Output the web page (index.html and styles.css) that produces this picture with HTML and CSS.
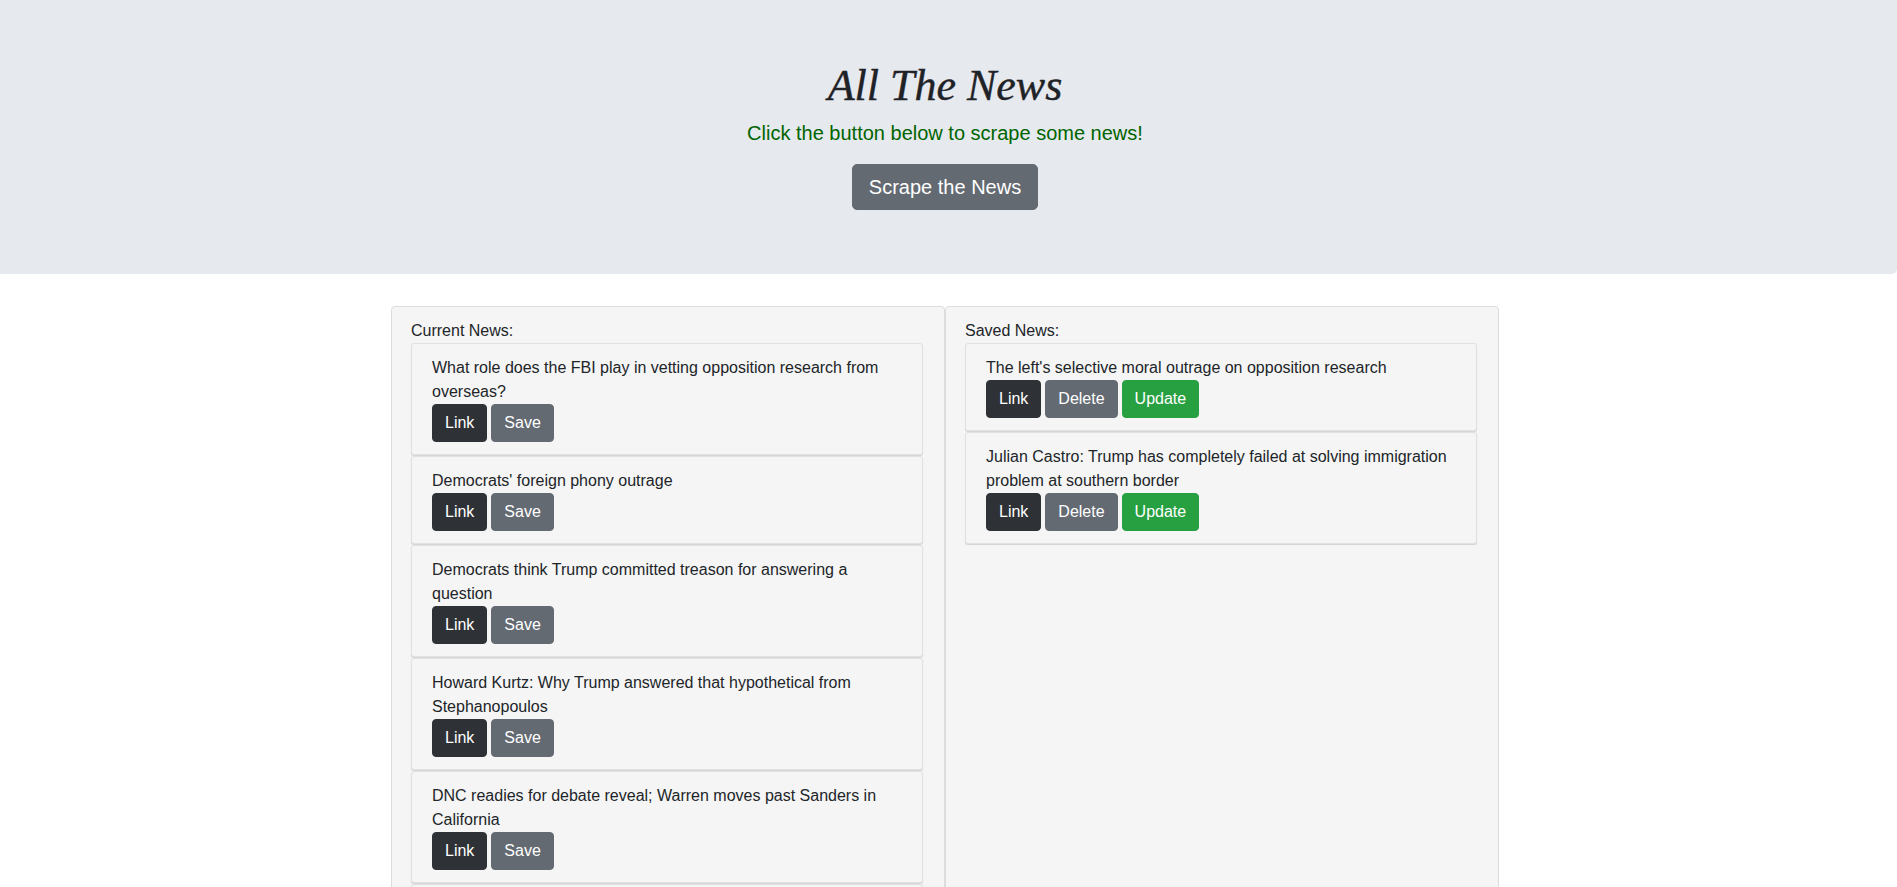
FILE: index.html
```html
<!DOCTYPE html>
<html lang="en">
<head>
<meta charset="utf-8">
<title>All The News</title>
<link rel="stylesheet" href="styles.css">
</head>
<body>
<header class="jumbotron">
  <h1 class="title">All The News</h1>
  <p class="lead">Click the button below to scrape some news!</p>
  <button class="btn btn-lg btn-secondary">Scrape the News</button>
</header>

<main class="board">
  <section class="panel">
    <div class="panel-label">Current News:</div>
    <div class="card">
      <p class="headline">What role does the FBI play in vetting opposition research from overseas?</p>
      <div class="actions"><button class="btn btn-dark">Link</button> <button class="btn btn-secondary">Save</button></div>
    </div>
    <div class="card">
      <p class="headline">Democrats' foreign phony outrage</p>
      <div class="actions"><button class="btn btn-dark">Link</button> <button class="btn btn-secondary">Save</button></div>
    </div>
    <div class="card">
      <p class="headline">Democrats think Trump committed treason for answering a question</p>
      <div class="actions"><button class="btn btn-dark">Link</button> <button class="btn btn-secondary">Save</button></div>
    </div>
    <div class="card">
      <p class="headline">Howard Kurtz: Why Trump answered that hypothetical from Stephanopoulos</p>
      <div class="actions"><button class="btn btn-dark">Link</button> <button class="btn btn-secondary">Save</button></div>
    </div>
    <div class="card">
      <p class="headline">DNC readies for debate reveal; Warren moves past Sanders in California</p>
      <div class="actions"><button class="btn btn-dark">Link</button> <button class="btn btn-secondary">Save</button></div>
    </div>
    <div class="card">
      <p class="headline">Pelosi says she does not believe Trump will accept election results</p>
      <div class="actions"><button class="btn btn-dark">Link</button> <button class="btn btn-secondary">Save</button></div>
    </div>
  </section>
  <section class="panel">
    <div class="panel-label">Saved News:</div>
    <div class="card">
      <p class="headline">The left's selective moral outrage on opposition research</p>
      <div class="actions"><button class="btn btn-dark">Link</button> <button class="btn btn-secondary">Delete</button> <button class="btn btn-success">Update</button></div>
    </div>
    <div class="card">
      <p class="headline">Julian Castro: Trump has completely failed at solving immigration problem at southern border</p>
      <div class="actions"><button class="btn btn-dark">Link</button> <button class="btn btn-secondary">Delete</button> <button class="btn btn-success">Update</button></div>
    </div>
  </section>
</main>
</body>
</html>
```
FILE: styles.css
```css
html, body {
  margin: 0;
  padding: 0;
}
body {
  font-family: "Liberation Sans", Arial, sans-serif;
  font-size: 16px;
  line-height: 24px;
  color: #212529;
  background: #ffffff;
}
.jumbotron {
  background: #e6e9ed;
  padding: 62px 7px 64px 0;
  text-align: center;
  border-radius: 0 0 5px 0;
}
.title {
  margin: 0 0 8px;
  font-family: "Liberation Serif", "Times New Roman", serif;
  font-style: italic;
  font-weight: 400;
  font-size: 44px;
  line-height: 48px;
  color: #1f2226;
  -webkit-text-stroke: 0.4px #1f2226;
}
.lead {
  margin: 0 0 16px;
  font-size: 20px;
  line-height: 30px;
  font-weight: 300;
  color: #006400;
}
.btn {
  display: inline-block;
  font-family: "Liberation Sans", Arial, sans-serif;
  font-size: 16px;
  line-height: 24px;
  padding: 6px 12px;
  border: 1px solid transparent;
  border-radius: 4px;
  color: #ffffff;
  cursor: pointer;
  vertical-align: middle;
}
.btn-lg {
  font-size: 20px;
  line-height: 30px;
  padding: 7px 16px;
  border-radius: 5px;
}
.btn-secondary {
  background: #636a72;
  border-color: #636a72;
}
.btn-dark {
  background: #2e3236;
  border-color: #2e3236;
}
.btn-success {
  background: #27a041;
  border-color: #27a041;
}
.board {
  display: grid;
  grid-template-columns: 554px 554px;
  margin: 32px 0 0 391px;
  width: 1108px;
}
.panel {
  background: #f5f5f5;
  border: 1px solid #dcdcdc;
  border-radius: 4px;
  padding: 12px 21px 20px 19px;
}
.panel-label {
  line-height: 24px;
}
.card {
  background: #f5f5f5;
  border: 1px solid #e1e1e1;
  border-radius: 3px;
  box-shadow: 0 1px 1px rgba(0, 0, 0, 0.14);
  padding: 12px 20px;
  margin-bottom: 1px;
}
.headline {
  margin: 0;
}
.actions {
  font-size: 0;
}
.actions .btn {
  margin-right: 4px;
}
```
